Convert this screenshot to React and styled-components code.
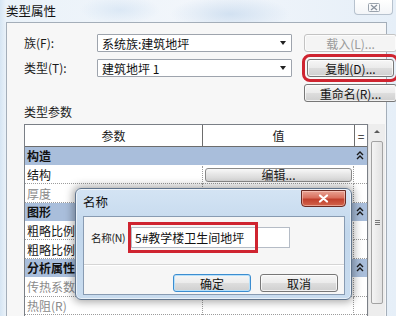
import React from 'react';
import styled, { createGlobalStyle } from 'styled-components';

const Global = createGlobalStyle`
  html, body { margin: 0; padding: 0; }
  body {
    width: 396px; height: 316px; overflow: hidden;
    font-family: "Noto Sans CJK SC", "Liberation Sans", sans-serif;
    font-size: 12px; color: #1b1b1b;
  }
  * { box-sizing: border-box; }
`;

const Frame = styled.div`
  position: relative;
  width: 396px;
  height: 316px;
  overflow: hidden;
  display: flex;
  flex-direction: column;
  background:
    radial-gradient(ellipse 60px 18px at 230px 14px, rgba(190,212,235,0.6), transparent),
    radial-gradient(ellipse 40px 14px at 120px 10px, rgba(200,220,240,0.5), transparent),
    linear-gradient(90deg, #d6e5f3 0px, #eaf2f9 6px, #f2f6fb 50%, #e6eff8 100%);
`;

const TitleBar = styled.div`
  height: 22px;
  flex: none;
  display: flex;
  justify-content: space-between;
  align-items: flex-start;
  padding-left: 6px;
`;

const Title = styled.div`
  font-size: 12.5px;
  line-height: 22px;
  color: #111;
`;

const CloseBox = styled.div`
  width: 39px;
  height: 15px;
  margin-right: 3px;
  background: linear-gradient(#ffffff, #f3f5f8);
  border: 1px solid #b7c2ce;
  border-top: none;
  border-radius: 0 0 4px 4px;
  display: flex;
  align-items: center;
  justify-content: center;
`;

const Client = styled.div`
  margin-left: 6px;
  width: 381px;
  flex: 1;
  background: #f7f7f7;
  border: 1px solid #a4aeb9;
  border-bottom: none;
  padding: 11px 0 0 17px;
  display: flex;
  flex-direction: column;
`;

const FormGrid = styled.div`
  display: grid;
  grid-template-columns: 61px 195px 93px;
  grid-auto-rows: 18px;
  column-gap: 12px;
  row-gap: 7px;
  align-items: center;
`;

const Label = styled.div`
  font-size: 12px;
  line-height: 18px;
  color: #1b1b1b;
`;

const Select = styled.div`
  height: 18px;
  background: #fff;
  border: 1px solid #9ea4ad;
  border-radius: 1px;
  display: flex;
  align-items: center;
  justify-content: space-between;
  padding: 0 5px 0 4px;
  font-size: 12px;
  color: #111;
`;

const Arrow = styled.span`
  width: 0; height: 0;
  border-left: 3px solid transparent;
  border-right: 3px solid transparent;
  border-top: 4px solid #222;
`;

const Button = styled.div`
  grid-column: ${p => p.$col || 'auto'};
  height: ${p => p.$h || 18}px;
  margin: ${p => p.$margin || '0'};
  display: flex;
  align-items: center;
  justify-content: center;
  font-size: 12px;
  color: ${p => (p.$disabled ? '#9a9a9a' : '#141414')};
  background: ${p => (p.$disabled ? '#f4f4f4' : 'linear-gradient(#f6f6f6 0%, #ebebeb 48%, #dddddd 52%, #cfcfcf 100%)')};
  border: 1px solid ${p => (p.$disabled ? '#c3c3c3' : p.$default ? '#3c8dd0' : '#777')};
  border-radius: 3px;
  box-shadow: inset 0 0 0 1px ${p => (p.$default ? '#b6e0fa' : 'rgba(255,255,255,0.7)')};
  outline: ${p => (p.$mark ? '3px solid #cf2430' : 'none')};
  outline-offset: 2px;
`;

const SectionLabel = styled.div`
  font-size: 12px;
  line-height: 12px;
  margin-top: 4px;
  height: 18px;
`;

const TableArea = styled.div`
  flex: 1;
  display: flex;
  width: 361px;
`;

const Table = styled.div`
  width: 344px;
  border: 1px solid #7a7f86;
  border-bottom: none;
  display: grid;
  grid-template-columns: 177px 152px 13px;
  grid-auto-rows: 18.7px;
  grid-template-rows: 22px;
  align-content: start;
  background: #fff;
`;

const HeadCell = styled.div`
  border-bottom: 1px solid #6d6d6d;
  border-left: ${p => (p.$first ? 'none' : '1px solid #6d6d6d')};
  display: flex;
  align-items: center;
  justify-content: center;
  font-size: 12px;
  background: #fff;
`;

const GroupRow = styled.div`
  grid-column: 1 / -1;
  background: #a9bedb;
  display: flex;
  align-items: center;
  justify-content: space-between;
  padding: 0 3px 0 2px;
  font-size: 12px;
  font-weight: 700;
  color: #111;
  border-bottom: 1px solid #fff;
`;

const NameCell = styled.div`
  display: flex;
  align-items: center;
  padding-left: 2px;
  font-size: 12px;
  white-space: nowrap;
  overflow: hidden;
  color: ${p => (p.$muted ? '#8a8a8a' : '#141414')};
  border-bottom: 1px dotted #9c9c9c;
`;

const ValueCell = styled.div`
  display: flex;
  align-items: center;
  padding: 0 1px 0 2px;
  border-left: 1px dotted #9c9c9c;
  border-right: 1px dotted #9c9c9c;
  border-bottom: 1px dotted #9c9c9c;
`;

const EqCell = styled.div`
  border-bottom: 1px dotted #9c9c9c;
`;

const CellButton = styled.div`
  flex: 1;
  height: 14px;
  display: flex;
  align-items: center;
  justify-content: center;
  font-size: 12px;
  background: linear-gradient(#f8f8f8, #e4e4e4 50%, #d6d6d6);
  border: 1px solid #8a8a8a;
  border-radius: 3px;
`;

const Scrollbar = styled.div`
  width: 17px;
  background: #ededed;
  border-left: 1px solid #e3e3e3;
  display: flex;
  flex-direction: column;
  align-items: center;
  padding-top: 6px;
`;

const ScrollArrow = styled.div`
  width: 0; height: 0;
  border-left: 3px solid transparent;
  border-right: 3px solid transparent;
  border-bottom: 3px solid #5a5a5a;
  margin-bottom: 8px;
`;

const Thumb = styled.div`
  width: 12px;
  height: 163px;
  border: 1px solid #a3a3a3;
  border-radius: 2px;
  background: linear-gradient(90deg, #f4f4f4, #e2e2e2);
  display: flex;
  align-items: center;
  justify-content: center;
`;

const Grip = styled.div`
  width: 5px;
  height: 5px;
  border-top: 1px solid #777;
  border-bottom: 1px solid #777;
  position: relative;
  &::after {
    content: '';
    position: absolute;
    left: 0; right: 0; top: 1px;
    border-top: 1px solid #777;
  }
`;

/* Overlay dialog */
const Dialog = styled.div`
  position: absolute;
  left: 75px;
  top: 188px;
  width: 277px;
  height: 112px;
  border: 1px solid #60748c;
  border-radius: 6px;
  background: linear-gradient(180deg, #d4e4f4 0%, #c2d7ec 40%, #c9dcef 100%);
  box-shadow: 0 0 9px 2px rgba(0,0,0,0.35), inset 0 0 0 1px rgba(255,255,255,0.6);
  display: flex;
  flex-direction: column;
  padding: 0 6px 4px 7px;
`;

const DlgTitleBar = styled.div`
  height: 27px;
  flex: none;
  display: flex;
  justify-content: space-between;
  align-items: flex-start;
`;

const DlgTitle = styled.div`
  font-size: 12.5px;
  line-height: 26px;
  color: #111;
`;

const RedClose = styled.div`
  width: 45px;
  height: 17px;
  margin-top: 1px;
  margin-right: -1px;
  border: 1px solid #6b2a22;
  border-radius: 0 0 4px 4px;
  background: linear-gradient(#e9a394 0%, #d9705e 45%, #c1402d 55%, #d2654c 100%);
  display: flex;
  align-items: center;
  justify-content: center;
  box-shadow: inset 0 0 0 1px rgba(255,220,210,0.5);
`;

const DlgClient = styled.div`
  flex: 1;
  background: #f6f6f6;
  border: 1px solid #889bb2;
  display: flex;
  flex-direction: column;
  padding: 10px 6px 0 7px;
`;

const NameRow = styled.div`
  display: flex;
  align-items: center;
  height: 21px;
`;

const NameLabel = styled.div`
  flex: none;
  width: 40px;
  white-space: nowrap;
  font-size: 10.5px;
  letter-spacing: -0.3px;
  color: #1b1b1b;
`;

const InputBox = styled.div`
  position: relative;
  flex: none;
  width: 159px;
  height: 21px;
  background: #fff;
  border: 1px solid #b5bcc6;
  display: flex;
  align-items: center;
  padding-left: 3px;
  font-size: 12px;
  color: #111;
`;

const RedMark = styled.div`
  position: absolute;
  left: -4px;
  top: -6px;
  width: 130px;
  height: 31px;
  border: 3px solid #cf2430;
`;

const Separator = styled.div`
  height: 2px;
  background: #d5d5d5;
  border-bottom: 1px solid #ffffff;
  margin: 16px -6px 0 -7px;
`;

const DlgButtons = styled.div`
  display: flex;
  justify-content: flex-end;
  gap: 9px;
  margin-top: 8px;
`;

const DlgButton = styled(Button)`
  width: 78px;
  height: 18px;
`;

const Chevrons = () => (
  <svg width="8" height="9" viewBox="0 0 8 9">
    <path d="M1 4 L4 1 L7 4 M1 8 L4 5 L7 8" stroke="#1a1a1a" strokeWidth="1.4" fill="none" />
  </svg>
);

const rows = [
  { type: 'group', label: '构造' },
  { type: 'row', label: '结构', button: '编辑...' },
  { type: 'row', label: '厚度', muted: true },
  { type: 'group', label: '图形' },
  { type: 'row', label: '粗略比例填充样式' },
  { type: 'row', label: '粗略比例填充颜色', button: '黑色' },
  { type: 'group', label: '分析属性' },
  { type: 'row', label: '传热系数(U)', muted: true },
  { type: 'row', label: '热阻(R)', muted: true },
];

export default function App() {
  return (
    <>
      <Global />
      <Frame>
        <TitleBar>
          <Title>类型属性</Title>
          <CloseBox>
            <svg width="12" height="9" viewBox="0 0 12 9">
              <rect x="0.5" y="0.5" width="11" height="8" fill="none" stroke="#9aa3ad" strokeWidth="1" rx="1" />
              <path d="M3 2 L9 7 M9 2 L3 7" stroke="#8a939e" strokeWidth="1.3" />
            </svg>
          </CloseBox>
        </TitleBar>
        <Client>
          <FormGrid>
            <Label>族(F):</Label>
            <Select>系统族:建筑地坪<Arrow /></Select>
            <Button $disabled>载入(L)...</Button>
            <Label>类型(T):</Label>
            <Select>建筑地坪 1<Arrow /></Select>
            <Button $mark $margin="0 3px 0 3px">复制(D)...</Button>
            <Button $col="3">重命名(R)...</Button>
          </FormGrid>
          <SectionLabel>类型参数</SectionLabel>
          <TableArea>
            <Table>
              <HeadCell $first>参数</HeadCell>
              <HeadCell>值</HeadCell>
              <HeadCell>=</HeadCell>
              {rows.map((r, i) =>
                r.type === 'group' ? (
                  <GroupRow key={i}>
                    <span>{r.label}</span>
                    <Chevrons />
                  </GroupRow>
                ) : (
                  <React.Fragment key={i}>
                    <NameCell $muted={r.muted}>{r.label}</NameCell>
                    <ValueCell>{r.button && <CellButton>{r.button}</CellButton>}</ValueCell>
                    <EqCell />
                  </React.Fragment>
                )
              )}
            </Table>
            <Scrollbar>
              <ScrollArrow />
              <Thumb><Grip /></Thumb>
            </Scrollbar>
          </TableArea>
        </Client>

        <Dialog>
          <DlgTitleBar>
            <DlgTitle>名称</DlgTitle>
            <RedClose>
              <svg width="11" height="9" viewBox="0 0 11 9">
                <path d="M2 1.5 L9 7.5 M9 1.5 L2 7.5" stroke="#ffffff" strokeWidth="2.2" strokeLinecap="round" />
              </svg>
            </RedClose>
          </DlgTitleBar>
          <DlgClient>
            <NameRow>
              <NameLabel>名称(N)</NameLabel>
              <InputBox>
                5#教学楼卫生间地坪
                <RedMark />
              </InputBox>
            </NameRow>
            <Separator />
            <DlgButtons>
              <DlgButton $default>确定</DlgButton>
              <DlgButton>取消</DlgButton>
            </DlgButtons>
          </DlgClient>
        </Dialog>
      </Frame>
    </>
  );
}
